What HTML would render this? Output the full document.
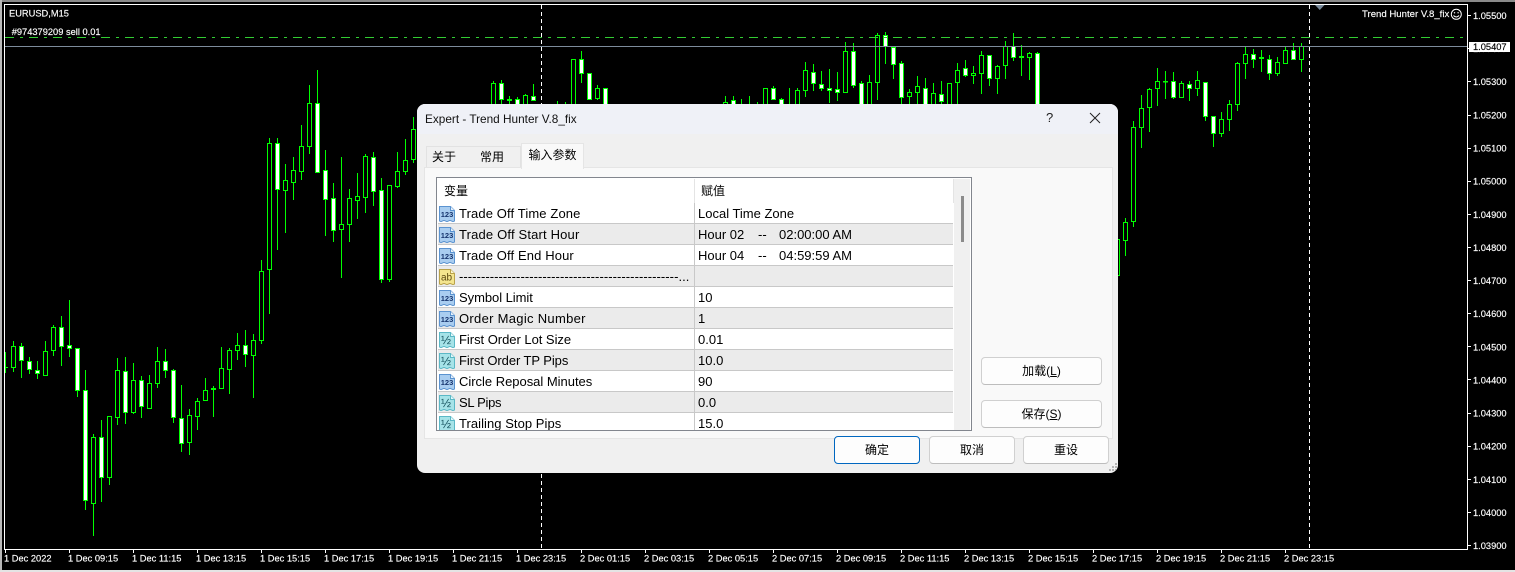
<!DOCTYPE html>
<html><head><meta charset="utf-8"><title>Expert - Trend Hunter V.8_fix</title>
<style>
html,body{margin:0;padding:0;background:#000;width:1515px;height:572px;overflow:hidden}
*{box-sizing:border-box}
body{position:relative;font-family:"Liberation Sans","Noto Sans CJK SC",sans-serif}
#c{position:absolute;left:0;top:0}
#c text{font-family:"Liberation Sans",sans-serif;font-size:9.3px;fill:#fff;stroke:#fff;stroke-width:.15px}
.a{position:absolute;white-space:nowrap}
#d{position:absolute;left:417px;top:104px;width:701px;height:369px;background:#f0f0f0;border-radius:8px;overflow:hidden;color:#000}
#tb{position:absolute;left:0;top:0;width:701px;height:30px;background:#eff1f7}
.tab{position:absolute;font-size:12px;text-align:center;line-height:20px}
.btn{position:absolute;height:28px;border:1px solid #d0d0d0;border-bottom-color:#bdbdbd;border-radius:4px;background:#fdfdfd;font-size:12px;line-height:26px;text-align:center}
#l{position:absolute;left:19px;top:73px;width:536px;height:254px;border:1px solid #82868e;background:#fff;overflow:hidden}
.r{position:absolute;left:1px;width:515px;height:21px;border-bottom:1px solid #c8c8c8;font-size:13px;line-height:20px;background:#fff}
.o{background:#ebebeb}
.r .v{position:absolute;left:256px;top:0;height:21px;width:1px;background:#c8c8c8}
.r span{position:absolute;white-space:nowrap;top:1px}
.r span.n{left:21px;letter-spacing:.12px}
.r span.w{left:260px}
.r svg{position:absolute;left:1px;top:3px}
.r svg text{font-family:"Liberation Sans",sans-serif;text-anchor:middle}
</style></head><body>
<svg id="c" width="1515" height="572" viewBox="0 0 1515 572">
<rect x="0" y="0" width="1515" height="2" fill="#8a8a8a"/>
<rect x="0" y="0" width="2" height="572" fill="#b8b8b8"/>
<rect x="0" y="570" width="1515" height="2" fill="#e4e4e4"/>
<g shape-rendering="crispEdges">
<path fill="none" stroke="#00ff00" d="M5.5 352V373M5 367.5h3M13.5 341V372M21.5 343V378M29.5 357V374M37.5 361V379M45.5 341V376M53.5 325V356M61.5 316V366M69.5 300V357M77.5 348V397M85.5 370V510M93.5 434V536M101.5 420V502M109.5 416V485M117.5 358V425M125.5 357V424M133.5 363V414M141.5 376V418M149.5 375V409M157.5 347V388M165.5 349V378M173.5 369V423M181.5 385V452M189.5 409V455M197.5 398V430M205.5 378V400M213.5 386V417M221.5 347V389M229.5 348V394M237.5 333V360M245.5 330V367M253.5 334V398M261.5 260V344M269.5 138V314M277.5 138V250M285.5 164V233M293.5 157V200M301.5 125V180M309.5 85V154M317.5 70V172M325.5 150V236M333.5 183V242M341.5 157V278M349.5 189V242M357.5 173V219M365.5 154V213M373.5 152V206M381.5 178V283M389.5 185V282M397.5 152V188M405.5 139V175M413.5 117V163
M493.5 81V110M501.5 80V110M509.5 96V110M517.5 97V110M525.5 94V110M533.5 84V101M557.5 101V110M565.5 102V110M573.5 59V110M581.5 51V83M589.5 73V100M597.5 85V100M605.5 88V110
M725.5 96V110M733.5 96V110M741.5 99V110M749.5 96V110M757.5 102V110M765.5 88V110M773.5 86V100M781.5 98V110M789.5 88V110M797.5 88V110M805.5 62V97M813.5 64V91M821.5 71V91M829.5 69V103M837.5 72V101M845.5 42V92M853.5 43V88M861.5 81V110M869.5 75V110M877.5 33V100M885.5 32V64M893.5 46V79M901.5 61V110M909.5 89V110M917.5 76V110M925.5 78V110M933.5 83V110M941.5 81V110M949.5 83V110M957.5 63V110M965.5 60V77M973.5 66V84M981.5 51V94M989.5 55V86M997.5 65V94M1005.5 41V79M1013.5 33V61M1021.5 45V76M1029.5 52V80M1037.5 52V110
M1125.5 218V256M1133.5 121V227M1141.5 95V148M1149.5 88V132M1157.5 68V106M1165.5 71V99M1173.5 72V99M1181.5 81V98M1189.5 81V101M1197.5 71V96M1205.5 82V121M1213.5 116V147M1221.5 112V137M1229.5 100V131M1237.5 62V111M1245.5 47V79M1253.5 49V68M1261.5 50V72M1269.5 55V80M1277.5 57V76M1285.5 47V63M1293.5 43V59M1301.5 43V72"/>
<path fill="#000" stroke="#00ff00" d="M11.5 346.5h4V367.5h-4zM43.5 351.5h4V375.5h-4zM51.5 327.5h4V350.5h-4zM91.5 437.5h4V503.5h-4zM107.5 416.5h4V477.5h-4zM115.5 370.5h4V417.5h-4zM131.5 380.5h4V412.5h-4zM147.5 383.5h4V408.5h-4zM155.5 361.5h4V383.5h-4zM187.5 415.5h4V442.5h-4zM195.5 401.5h4V416.5h-4zM203.5 390.5h4V400.5h-4zM219.5 368.5h4V388.5h-4zM227.5 350.5h4V369.5h-4zM235.5 345.5h4V350.5h-4zM251.5 340.5h4V355.5h-4zM259.5 271.5h4V340.5h-4zM267.5 143.5h4V269.5h-4zM283.5 180.5h4V190.5h-4zM291.5 170.5h4V182.5h-4zM299.5 146.5h4V171.5h-4zM307.5 103.5h4V146.5h-4zM339.5 224.5h4V229.5h-4zM347.5 198.5h4V224.5h-4zM355.5 196.5h4V200.5h-4zM363.5 156.5h4V197.5h-4zM387.5 185.5h4V279.5h-4zM395.5 171.5h4V186.5h-4zM403.5 160.5h4V171.5h-4zM411.5 129.5h4V159.5h-4z
M491.5 83.5h4V115h-4zM523.5 95.5h4V115h-4zM571.5 59.5h4V115h-4zM595.5 88.5h4V98.5h-4z
M723.5 102.5h4V115h-4zM763.5 88.5h4V115h-4zM795.5 90.5h4V115h-4zM803.5 70.5h4V90.5h-4zM843.5 51.5h4V92.5h-4zM867.5 82.5h4V115h-4zM875.5 35.5h4V82.5h-4zM907.5 92.5h4V96.5h-4zM915.5 86.5h4V92.5h-4zM931.5 93.5h4V115h-4zM947.5 83.5h4V115h-4zM955.5 70.5h4V82.5h-4zM971.5 73.5h4V75.5h-4zM979.5 55.5h4V73.5h-4zM995.5 66.5h4V78.5h-4zM1003.5 46.5h4V65.5h-4zM1027.5 53.5h4V57.5h-4z
M1115.5 239.5h4V275.5h-4zM1123.5 222.5h4V240.5h-4zM1131.5 127.5h4V221.5h-4zM1139.5 108.5h4V127.5h-4zM1147.5 89.5h4V107.5h-4zM1155.5 81.5h4V88.5h-4zM1179.5 83.5h4V97.5h-4zM1195.5 80.5h4V88.5h-4zM1219.5 119.5h4V133.5h-4zM1227.5 104.5h4V119.5h-4zM1235.5 63.5h4V104.5h-4zM1243.5 54.5h4V63.5h-4zM1275.5 62.5h4V73.5h-4zM1283.5 50.5h4V63.5h-4zM1299.5 46.5h4V59.5h-4z"/>
<path fill="#fff" stroke="#00ff00" d="M19.5 346.5h4V360.5h-4zM27.5 361.5h4V369.5h-4zM35.5 370.5h4V373.5h-4zM59.5 327.5h4V346.5h-4zM67.5 345.5h4V348.5h-4zM75.5 348.5h4V390.5h-4zM83.5 390.5h4V500.5h-4zM99.5 437.5h4V477.5h-4zM123.5 371.5h4V412.5h-4zM139.5 380.5h4V406.5h-4zM163.5 361.5h4V370.5h-4zM171.5 370.5h4V417.5h-4zM179.5 418.5h4V443.5h-4zM211.5 388.5h4V389.5h-4zM243.5 345.5h4V354.5h-4zM275.5 143.5h4V189.5h-4zM315.5 103.5h4V172.5h-4zM323.5 170.5h4V199.5h-4zM331.5 198.5h4V230.5h-4zM371.5 157.5h4V191.5h-4zM379.5 190.5h4V279.5h-4z
M499.5 83.5h4V99.5h-4zM507.5 99.5h4V100.5h-4zM515.5 99.5h4V115h-4zM531.5 96.5h4V100.5h-4zM579.5 59.5h4V73.5h-4zM587.5 73.5h4V99.5h-4zM603.5 88.5h4V115h-4z
M731.5 100.5h4V115h-4zM771.5 88.5h4V99.5h-4zM779.5 99.5h4V115h-4zM811.5 72.5h4V83.5h-4zM819.5 84.5h4V88.5h-4zM827.5 88.5h4V90.5h-4zM835.5 89.5h4V92.5h-4zM851.5 51.5h4V85.5h-4zM859.5 83.5h4V115h-4zM883.5 35.5h4V46.5h-4zM891.5 47.5h4V64.5h-4zM899.5 63.5h4V97.5h-4zM923.5 88.5h4V115h-4zM939.5 94.5h4V101.5h-4zM963.5 68.5h4V75.5h-4zM987.5 55.5h4V78.5h-4zM1011.5 46.5h4V57.5h-4zM1019.5 56.5h4V57.5h-4zM1035.5 53.5h4V115h-4z
M1163.5 81.5h4V82h-4zM1171.5 81.5h4V97.5h-4zM1187.5 84.5h4V88.5h-4zM1203.5 82.5h4V116.5h-4zM1211.5 116.5h4V133.5h-4zM1251.5 54.5h4V59.5h-4zM1259.5 57.5h4V58.5h-4zM1267.5 59.5h4V73.5h-4zM1291.5 50.5h4V59.5h-4z"/>
<path stroke="#32cd32" fill="none" stroke-dasharray="9 6 3 6" d="M5 37.5H1467"/>
<path stroke="#7d8b9b" fill="none" d="M5 46.5H1467"/>
<path stroke="#fff" fill="none" stroke-dasharray="4 3" d="M541.5 5V549M1309.5 5V549"/>
<path stroke="#fff" fill="none" d="M4.5 4.5H1467.5V549.5H4.5z"/>
<path stroke="#fff" fill="none" d="M1468 15.5h3M1468 48.5h3M1468 81.5h3M1468 115.5h3M1468 148.5h3M1468 181.5h3M1468 214.5h3M1468 247.5h3M1468 280.5h3M1468 313.5h3M1468 346.5h3M1468 379.5h3M1468 413.5h3M1468 446.5h3M1468 479.5h3M1468 512.5h3M1468 545.5h3M5.5 550v3M69.5 550v3M133.5 550v3M197.5 550v3M261.5 550v3M325.5 550v3M389.5 550v3M453.5 550v3M517.5 550v3M581.5 550v3M645.5 550v3M709.5 550v3M773.5 550v3M837.5 550v3M901.5 550v3M965.5 550v3M1029.5 550v3M1093.5 550v3M1157.5 550v3M1221.5 550v3M1285.5 550v3"/>
</g>
<path d="M1315 5h9.5l-4.7 5z" fill="#778899"/>
<text x="9" y="16.5">EURUSD,M15</text>
<text x="11.7" y="35">#974379209 sell 0.01</text>
<text x="1362" y="17" style="font-size:9.6px">Trend Hunter V.8_fix</text>
<g fill="none" stroke="#fff"><circle cx="1456.3" cy="14.3" r="5"/><path d="M1453.5 15.5q2.8 3 5.6 0"/></g>
<circle cx="1454.5" cy="12.8" r=".7" fill="#fff"/><circle cx="1458.1" cy="12.8" r=".7" fill="#fff"/>
<text x="1473" y="19">1.05500</text><text x="1473" y="52">1.05400</text><text x="1473" y="85">1.05300</text><text x="1473" y="118.500">1.05200</text><text x="1473" y="151.500">1.05100</text><text x="1473" y="184.500">1.05000</text><text x="1473" y="218">1.04900</text><text x="1473" y="251">1.04800</text><text x="1473" y="284">1.04700</text><text x="1473" y="317">1.04600</text><text x="1473" y="350.500">1.04500</text><text x="1473" y="383.500">1.04400</text><text x="1473" y="416.500">1.04300</text><text x="1473" y="449.500">1.04200</text><text x="1473" y="483">1.04100</text><text x="1473" y="516">1.04000</text><text x="1473" y="549">1.03900</text>
<rect x="1469" y="42" width="41" height="10" fill="#fff"/>
<text x="1473" y="50" style="fill:#000;stroke:#000">1.05407</text>
<text x="4" y="561.500">1 Dec 2022</text><text x="68" y="561.500">1 Dec 09:15</text><text x="132" y="561.500">1 Dec 11:15</text><text x="196" y="561.500">1 Dec 13:15</text><text x="260" y="561.500">1 Dec 15:15</text><text x="324" y="561.500">1 Dec 17:15</text><text x="388" y="561.500">1 Dec 19:15</text><text x="452" y="561.500">1 Dec 21:15</text><text x="516" y="561.500">1 Dec 23:15</text><text x="580" y="561.500">2 Dec 01:15</text><text x="644" y="561.500">2 Dec 03:15</text><text x="708" y="561.500">2 Dec 05:15</text><text x="772" y="561.500">2 Dec 07:15</text><text x="836" y="561.500">2 Dec 09:15</text><text x="900" y="561.500">2 Dec 11:15</text><text x="964" y="561.500">2 Dec 13:15</text><text x="1028" y="561.500">2 Dec 15:15</text><text x="1092" y="561.500">2 Dec 17:15</text><text x="1156" y="561.500">2 Dec 19:15</text><text x="1220" y="561.500">2 Dec 21:15</text><text x="1284" y="561.500">2 Dec 23:15</text>
</svg>

<div id="d">
<div id="tb"></div>
<div class="a" style="left:8px;top:7px;font-size:11.8px;line-height:16px;color:#111">Expert - Trend Hunter V.8_fix</div>
<div class="a" style="left:629px;top:6px;font-size:13px;line-height:16px;color:#222">?</div>
<svg class="a" style="left:672px;top:8px" width="12" height="12" viewBox="0 0 12 12"><path d="M1 1L11 11M11 1L1 11" stroke="#222" fill="none"/></svg>

<div class="tab" style="left:9px;top:42px;width:48px;height:22px;border:1px solid #e2e2e2;border-bottom:0;background:#f0f0f0;text-align:left;padding-left:5px">关于</div>
<div class="tab" style="left:56px;top:42px;width:48px;height:22px;border:1px solid #e2e2e2;border-left:0;border-bottom:0;background:#f0f0f0;text-align:left;padding-left:7px">常用</div>
<div class="a" style="left:7px;top:63px;width:689px;height:272px;background:#f9f9f9;border:1px solid #e5e5e5"></div>
<div class="tab" style="left:104px;top:39px;width:63px;height:26px;border:1px solid #e5e5e5;border-bottom:0;background:#f9f9f9;line-height:22px">输入参数</div>

<div id="l">
<div class="a" style="left:7px;top:5px;font-size:12px;line-height:16px">变量</div>
<div class="a" style="left:264px;top:5px;font-size:12px;line-height:16px">赋值</div>
<div class="a" style="left:257px;top:1px;width:1px;height:24px;background:#e4e4e4"></div>
<div class="a" style="left:516px;top:1px;width:1px;height:24px;background:#e4e4e4"></div>

<div class="r" style="top:25px"><svg width="16" height="17" viewBox="0 0 16 17"><path d="M.5.5H11.5L15.5 4.5V15q-1.500 1-3 0t-3 0t-3 0t-3 0t-3 0z" fill="#a9cdf0" stroke="#5b93d0"/><path d="M11.5.5V4.500H15.500" fill="#e6f1fb" stroke="#5b93d0"/><text x="8" y="11" font-size="7.5" font-weight="bold" fill="#17356e">123</text></svg><span class="n">Trade Off Time Zone</span><i class="v"></i><span class="w">Local Time Zone</span></div>
<div class="r o" style="top:46px"><svg width="16" height="17" viewBox="0 0 16 17"><path d="M.5.5H11.5L15.5 4.5V15q-1.500 1-3 0t-3 0t-3 0t-3 0t-3 0z" fill="#a9cdf0" stroke="#5b93d0"/><path d="M11.5.5V4.500H15.500" fill="#e6f1fb" stroke="#5b93d0"/><text x="8" y="11" font-size="7.5" font-weight="bold" fill="#17356e">123</text></svg><span class="n" style="letter-spacing:.17px">Trade Off Start Hour</span><i class="v"></i><span class="w">Hour 02</span><span style="left:320px">--</span><span style="left:341px">02:00:00 AM</span></div>
<div class="r" style="top:67px"><svg width="16" height="17" viewBox="0 0 16 17"><path d="M.5.5H11.5L15.5 4.5V15q-1.500 1-3 0t-3 0t-3 0t-3 0t-3 0z" fill="#a9cdf0" stroke="#5b93d0"/><path d="M11.5.5V4.500H15.500" fill="#e6f1fb" stroke="#5b93d0"/><text x="8" y="11" font-size="7.5" font-weight="bold" fill="#17356e">123</text></svg><span class="n">Trade Off End Hour</span><i class="v"></i><span class="w">Hour 04</span><span style="left:320px">--</span><span style="left:341px">04:59:59 AM</span></div>
<div class="r o" style="top:88px"><svg width="16" height="17" viewBox="0 0 16 17"><path d="M.5.5H11.5L15.5 4.5V15q-1.500 1-3 0t-3 0t-3 0t-3 0t-3 0z" fill="#f4e58e" stroke="#b9a24a"/><path d="M11.5.5V4.500H15.500" fill="#fcf6cf" stroke="#b9a24a"/><text x="7.500" y="11.500" font-size="10" fill="#5c4a10">ab</text></svg><span class="n" style="letter-spacing:.06px">--------------------------------------------------...</span><i class="v"></i></div>
<div class="r" style="top:109px"><svg width="16" height="17" viewBox="0 0 16 17"><path d="M.5.5H11.5L15.5 4.5V15q-1.500 1-3 0t-3 0t-3 0t-3 0t-3 0z" fill="#a9cdf0" stroke="#5b93d0"/><path d="M11.5.5V4.500H15.500" fill="#e6f1fb" stroke="#5b93d0"/><text x="8" y="11" font-size="7.5" font-weight="bold" fill="#17356e">123</text></svg><span class="n" style="letter-spacing:-.05px">Symbol Limit</span><i class="v"></i><span class="w">10</span></div>
<div class="r o" style="top:130px"><svg width="16" height="17" viewBox="0 0 16 17"><path d="M.5.5H11.5L15.5 4.5V15q-1.500 1-3 0t-3 0t-3 0t-3 0t-3 0z" fill="#a9cdf0" stroke="#5b93d0"/><path d="M11.5.5V4.500H15.500" fill="#e6f1fb" stroke="#5b93d0"/><text x="8" y="11" font-size="7.5" font-weight="bold" fill="#17356e">123</text></svg><span class="n" style="letter-spacing:.3px">Order Magic Number</span><i class="v"></i><span class="w">1</span></div>
<div class="r" style="top:151px"><svg width="16" height="17" viewBox="0 0 16 17"><path d="M.5.5H11.5L15.5 4.5V15q-1.500 1-3 0t-3 0t-3 0t-3 0t-3 0z" fill="#a6e3e8" stroke="#5bb8c6"/><path d="M11.5.5V4.500H15.500" fill="#e3f8fa" stroke="#5bb8c6"/><text x="7" y="12" font-size="12" fill="#14505c">½</text></svg><span class="n" style="letter-spacing:-.03px">First Order Lot Size</span><i class="v"></i><span class="w">0.01</span></div>
<div class="r o" style="top:172px"><svg width="16" height="17" viewBox="0 0 16 17"><path d="M.5.5H11.5L15.5 4.5V15q-1.500 1-3 0t-3 0t-3 0t-3 0t-3 0z" fill="#a6e3e8" stroke="#5bb8c6"/><path d="M11.5.5V4.500H15.500" fill="#e3f8fa" stroke="#5bb8c6"/><text x="7" y="12" font-size="12" fill="#14505c">½</text></svg><span class="n" style="letter-spacing:-.08px">First Order TP Pips</span><i class="v"></i><span class="w">10.0</span></div>
<div class="r" style="top:193px"><svg width="16" height="17" viewBox="0 0 16 17"><path d="M.5.5H11.5L15.5 4.5V15q-1.500 1-3 0t-3 0t-3 0t-3 0t-3 0z" fill="#a9cdf0" stroke="#5b93d0"/><path d="M11.5.5V4.500H15.500" fill="#e6f1fb" stroke="#5b93d0"/><text x="8" y="11" font-size="7.5" font-weight="bold" fill="#17356e">123</text></svg><span class="n" style="letter-spacing:-.02px">Circle Reposal Minutes</span><i class="v"></i><span class="w">90</span></div>
<div class="r o" style="top:214px"><svg width="16" height="17" viewBox="0 0 16 17"><path d="M.5.5H11.5L15.5 4.5V15q-1.500 1-3 0t-3 0t-3 0t-3 0t-3 0z" fill="#a6e3e8" stroke="#5bb8c6"/><path d="M11.5.5V4.500H15.500" fill="#e3f8fa" stroke="#5bb8c6"/><text x="7" y="12" font-size="12" fill="#14505c">½</text></svg><span class="n" style="letter-spacing:-.3px">SL Pips</span><i class="v"></i><span class="w">0.0</span></div>
<div class="r" style="top:235px"><svg width="16" height="17" viewBox="0 0 16 17"><path d="M.5.5H11.5L15.5 4.5V15q-1.500 1-3 0t-3 0t-3 0t-3 0t-3 0z" fill="#a6e3e8" stroke="#5bb8c6"/><path d="M11.5.5V4.500H15.500" fill="#e3f8fa" stroke="#5bb8c6"/><text x="7" y="12" font-size="12" fill="#14505c">½</text></svg><span class="n" style="letter-spacing:.05px">Trailing Stop Pips</span><i class="v"></i><span class="w">15.0</span></div>

<div class="a" style="left:517px;top:1px;width:16px;height:251px;background:#f0f0f0"></div>
<div class="a" style="left:524px;top:18px;width:3px;height:46px;background:#8b8b8b"></div>
</div>

<div class="btn" style="left:564px;top:253px;width:121px">加载(<u>L</u>)</div>
<div class="btn" style="left:564px;top:296px;width:121px">保存(<u>S</u>)</div>
<div class="btn" style="left:417px;top:332px;width:86px;border:1px solid #0067c0;border-radius:4px">确定</div>
<div class="btn" style="left:512px;top:332px;width:86px">取消</div>
<div class="btn" style="left:606px;top:332px;width:86px">重设</div>
<svg class="a" style="left:691px;top:358px" width="10" height="11" viewBox="0 0 10 11"><path fill="#b4b4b4" d="M7 1h2v2H7zM4 4h2v2H4zM7 4h2v2H7zM1 7h2v2H1zM4 7h2v2H4zM7 7h2v2H7z"/></svg>
</div>
</body></html>
